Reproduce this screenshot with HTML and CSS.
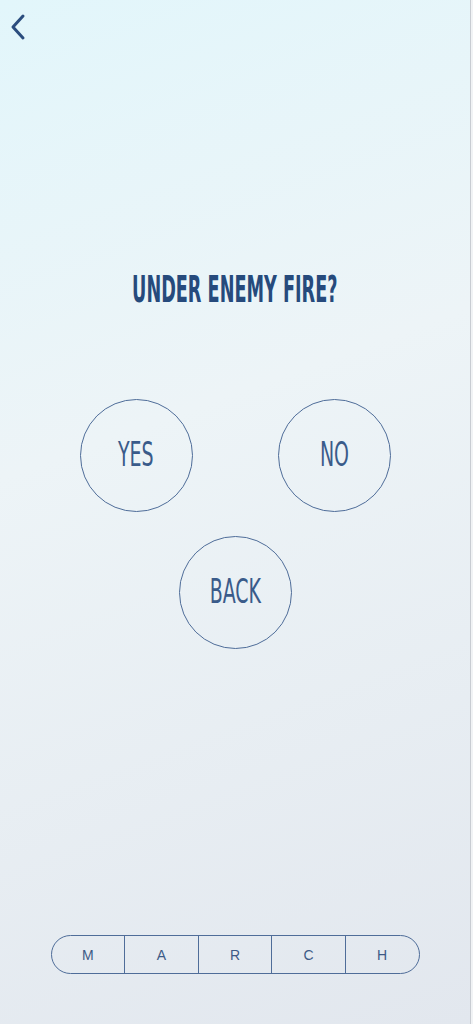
FILE: index.html
```html
<!DOCTYPE html>
<html lang="en">
  <head>
    <meta charset="UTF-8" />
    <meta name="viewport" content="width=device-width, initial-scale=1.0" />
    <title>March</title>
    <link rel="stylesheet" href="styles.css">
  </head>

  <body>
    <div class="screen">
      <header class="top-bar">
        <button class="back-arrow" aria-label="Back">
          <svg width="18" height="28" viewBox="0 0 18 28">
            <path d="M14 3 L4 14 L14 25" fill="none" stroke="#2b4d7e" stroke-width="3" stroke-linecap="round" stroke-linejoin="round" />
          </svg>
        </button>
      </header>

      <h1 class="question"><span>UNDER ENEMY FIRE?</span></h1>

      <div class="answers">
        <div class="answer-row">
          <button class="circle-btn"><span>YES</span></button>
          <button class="circle-btn"><span>NO</span></button>
        </div>
        <button class="circle-btn"><span>BACK</span></button>
      </div>

      <nav class="march-bar">
        <div class="march-step">M</div>
        <div class="march-step">A</div>
        <div class="march-step">R</div>
        <div class="march-step">C</div>
        <div class="march-step">H</div>
      </nav>
    </div>
  </body>
</html>
```

FILE: styles.css
```css
html, body {
  margin: 0;
  padding: 0;
  height: 100%;
  background: #f1f3f5;
}

.screen {
  width: 470px;
  height: 1024px;
  border-right: 1px solid #c8ccd2;
  background: linear-gradient(160deg, #e2f6fb 0%, #edf4f7 40%, #e2e7ee 100%);
  display: flex;
  flex-direction: column;
  align-items: center;
  font-family: 'DejaVu Sans', sans-serif;
  color: #2b4d7e;
}

.top-bar {
  align-self: stretch;
  height: 54px;
  padding: 13px 0 0 9px;
  box-sizing: border-box;
}

.back-arrow {
  background: transparent;
  border: none;
  padding: 0;
  cursor: pointer;
}

/* condensed headline look: squeeze the glyphs horizontally */
.question {
  margin: 214px 0 0;
  font-size: 37px;
  font-weight: bold;
  font-stretch: condensed;
  line-height: 44px;
  color: #264a7c;
}

.question span,
.circle-btn span {
  display: inline-block;
}

.question span {
  transform: scaleX(0.53);
}

.answers {
  margin-top: 87px;
  display: flex;
  flex-direction: column;
  align-items: center;
  gap: 24px;
}

.answer-row {
  display: flex;
  gap: 85px;
}

.circle-btn {
  width: 113px;
  height: 113px;
  border-radius: 50%;
  border: 1.3px solid #4f6d99;
  background: transparent;
  display: flex;
  justify-content: center;
  align-items: center;
  font-family: 'DejaVu Sans', sans-serif;
  font-size: 34px;
  font-stretch: condensed;
  color: #3a5b8a;
  padding: 0 0 4px;
  cursor: pointer;
}

.circle-btn span {
  transform: scaleX(0.62);
}

.march-bar {
  margin-top: auto;
  margin-bottom: 50px;
  width: 369px;
  height: 39px;
  box-sizing: border-box;
  border: 1.3px solid #4f6d99;
  border-radius: 20px;
  display: flex;
}

.march-step {
  flex: 1;
  display: flex;
  justify-content: center;
  align-items: center;
  font-family: 'Liberation Sans', Arial, sans-serif;
  font-size: 14px;
  color: #3d5a86;
}

.march-step + .march-step {
  border-left: 1.3px solid #4f6d99;
}
```
